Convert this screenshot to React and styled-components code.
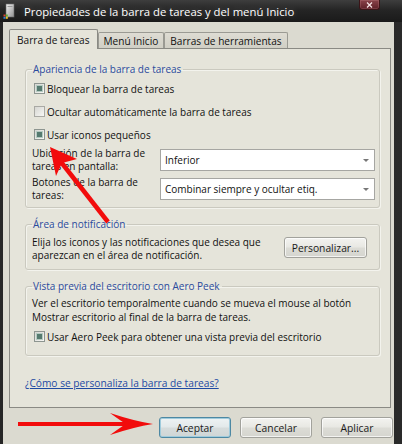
import React from 'react';
import styled, { createGlobalStyle } from 'styled-components';

const GlobalStyle = createGlobalStyle`
  html, body {
    margin: 0;
    padding: 0;
  }
  body {
    background: #1b1b1b;
    font-family: "Open Sans", "Noto Sans", sans-serif;
  }
`;

const Window = styled.div`
  position: relative;
  width: 402px;
  height: 444px;
  overflow: hidden;
  display: flex;
  flex-direction: column;
  background: linear-gradient(90deg, #262626, #1d1d1d 50%, #2a2a2a);
`;

const TitleBar = styled.div`
  height: 22px;
  flex-shrink: 0;
  display: flex;
  align-items: center;
  padding-left: 3px;
  background: linear-gradient(#3e3e3e, #252525 45%, #1a1a1a);
`;

const TitleIcon = styled.svg`
  width: 12px;
  height: 16px;
  margin-right: 9px;
  flex-shrink: 0;
`;

const TitleText = styled.span`
  color: #fff;
  font-size: 11.3px;
  white-space: nowrap;
  text-shadow: 0 0 6px rgba(255, 255, 255, 0.25);
`;

const CloseButton = styled.div`
  align-self: flex-start;
  margin-left: auto;
  margin-right: 22px;
  width: 21px;
  height: 10px;
  box-sizing: border-box;
  border: 1px solid #3a1417;
  border-top: none;
  border-radius: 0 0 3px 3px;
  background: linear-gradient(#8a434a, #5e2028);
  box-shadow: inset 0 0 0 1px rgba(255, 200, 200, 0.15);
  display: flex;
  align-items: center;
  justify-content: center;
`;

const Body = styled.div`
  flex: 1;
  margin: 0 8px 0 3px;
  padding: 7px 1px 0 6px;
  background: #dbdad0;
  display: flex;
  flex-direction: column;
  font-size: 10px;
  color: #111;
`;

const TabStrip = styled.div`
  height: 20px;
  display: flex;
  align-items: flex-end;
  margin-bottom: -1px;
  position: relative;
  z-index: 1;
`;

const Tab = styled.div`
  height: ${p => (p.$active ? 20 : 16)}px;
  margin-bottom: ${p => (p.$active ? 0 : 1)}px;
  padding: 0 ${p => (p.$active ? 7 : 5)}px;
  box-sizing: border-box;
  border: 1px solid ${p => (p.$active ? '#8a8a84' : '#9a9a93')};
  border-bottom: none;
  border-radius: 2px 2px 0 0;
  background: ${p => (p.$active ? '#e5e4da' : 'linear-gradient(#dedcd3, #d0cfc5)')};
  display: flex;
  align-items: center;
  padding-top: ${p => (p.$active ? 0 : 1)}px;
  font-size: 10.1px;
  white-space: nowrap;
`;

const Panel = styled.div`
  height: 360px;
  box-sizing: border-box;
  margin-right: 2px;
  border: 1px solid #8a8a84;
  background: #e5e4da;
  padding: 14px 10px 0 15px;
  display: flex;
  flex-direction: column;
`;

const Group = styled.fieldset`
  margin: 0;
  min-width: 0;
  border: 1px solid #cac9bf;
  border-radius: 3px;
  padding: 0 5px 7px 6px;
  box-shadow: 1px 1px 0 #f3f3ed, inset 1px 1px 0 #f3f3ed;

  & + & {
    margin-top: 10px;
  }
`;

const Legend = styled.legend`
  padding: 0 2px 0 1px;
  line-height: 13px;
  color: #2b4a9d;
`;

const CheckList = styled.div`
  padding-top: ${p => p.$top || 0}px;
  display: flex;
  flex-direction: column;
`;

const CheckRow = styled.label`
  height: 23px;
  display: flex;
  align-items: center;
  gap: 2px;
  padding-left: 2px;
  white-space: nowrap;
`;

const Box = styled.span`
  width: 11px;
  height: 11px;
  box-sizing: border-box;
  border: 1px solid ${p => (p.$checked ? '#8d9590' : '#a9a9a4')};
  background: linear-gradient(135deg, #d6d6d2, #f7f7f4);
  display: flex;
  align-items: center;
  justify-content: center;
  flex-shrink: 0;

  &::after {
    content: '';
    display: ${p => (p.$checked ? 'block' : 'none')};
    width: 5px;
    height: 5px;
    background: #557a6f;
    box-shadow: 0 0 0 1px #b4cac1;
  }
`;

const Checkbox = ({ checked, children }) => (
  <CheckRow>
    <Box $checked={checked} />
    {children}
  </CheckRow>
);

const FieldGrid = styled.div`
  margin-top: 3px;
  display: grid;
  grid-template-columns: 128px 215px;
  grid-auto-rows: 22px;
  row-gap: 7px;
  align-items: center;
`;

const FieldLabel = styled.div`
  height: 22px;
  display: flex;
  flex-direction: column;
  justify-content: center;
  line-height: 13.5px;
  white-space: nowrap;
`;

const Select = styled.div`
  height: 22px;
  box-sizing: border-box;
  border: 1px solid #a6a6a2;
  background: #fff;
  padding: 0 5px 0 4px;
  display: flex;
  align-items: center;
  white-space: nowrap;

  &::after {
    content: '';
    margin-left: auto;
    border-left: 3px solid transparent;
    border-right: 3px solid transparent;
    border-top: 3px solid #777;
  }
`;

const InfoRow = styled.div`
  display: flex;
  align-items: flex-start;
  justify-content: space-between;
  padding-top: 5px;
`;

const Paragraph = styled.div`
  line-height: ${p => p.$lh || 13}px;
  padding-top: ${p => p.$top || 0}px;
  white-space: nowrap;
`;

const PushButton = styled.button`
  width: ${p => p.$width || 72}px;
  height: 21px;
  margin: ${p => p.$margin || 0};
  flex-shrink: 0;
  box-sizing: border-box;
  padding: 0;
  font-family: inherit;
  font-size: 10.3px;
  color: #1a1a1a;
  border: 1px solid ${p => (p.$default ? '#4d88a3' : '#a2a29c')};
  border-radius: 3px;
  background: ${p =>
    p.$default
      ? 'linear-gradient(#eef3f4, #e3e9ea 48%, #d6dcdc 52%, #d0d6d6)'
      : 'linear-gradient(#f3f3f0, #e8e8e3 48%, #dcdcd6 52%, #d5d5cf)'};
  box-shadow: inset 0 0 0 1px ${p => (p.$default ? '#9fcbdc' : 'rgba(255,255,255,0.7)')};
`;

const HelpLink = styled.a`
  margin-top: 21px;
  line-height: 13px;
  font-size: 10.2px;
  color: #1e4aa3;
  text-decoration: underline;
  align-self: flex-start;
`;

const ButtonBar = styled.div`
  margin-top: 9px;
  display: flex;
  justify-content: flex-end;
  gap: 9px;
`;

const Overlay = styled.svg`
  position: absolute;
  left: 0;
  top: 0;
  width: 402px;
  height: 444px;
  pointer-events: none;
`;

export default function App() {
  return (
    <>
      <GlobalStyle />
      <Window>
        <TitleBar>
          <TitleIcon viewBox="0 0 12 16">
            <defs>
              <linearGradient id="doc" x1="0" y1="0" x2="1" y2="1">
                <stop offset="0" stopColor="#f4f4f4" />
                <stop offset="1" stopColor="#8f8f8f" />
              </linearGradient>
            </defs>
            <rect x="3" y="1" width="8" height="13" fill="url(#doc)" stroke="#6a6a6a" strokeWidth="0.6" />
            <rect x="4.5" y="3" width="5" height="1" fill="#9a9a9a" />
            <rect x="0.5" y="11.5" width="2" height="2" fill="#e2412b" />
            <rect x="2.8" y="11.5" width="2" height="2" fill="#5bb132" />
            <rect x="0.5" y="13.8" width="2" height="2" fill="#2f7fd8" />
            <rect x="2.8" y="13.8" width="2" height="2" fill="#f2c02a" />
          </TitleIcon>
          <TitleText>Propiedades de la barra de tareas y del menú Inicio</TitleText>
          <CloseButton>
            <svg width="7" height="6" viewBox="0 0 7 6">
              <path d="M1 0.5L6 5.5M6 0.5L1 5.5" stroke="#f6e3e4" strokeWidth="1.2" />
            </svg>
          </CloseButton>
        </TitleBar>

        <Body>
          <TabStrip>
            <Tab $active>Barra de tareas</Tab>
            <Tab>Menú Inicio</Tab>
            <Tab>Barras de herramientas</Tab>
          </TabStrip>

          <Panel>
            <Group>
              <Legend>Apariencia de la barra de tareas</Legend>
              <CheckList $top={1}>
                <Checkbox checked>Bloquear la barra de tareas</Checkbox>
                <Checkbox>Ocultar automáticamente la barra de tareas</Checkbox>
                <Checkbox checked>Usar iconos pequeños</Checkbox>
              </CheckList>
              <FieldGrid>
                <FieldLabel>
                  <span>Ubicación de la barra de</span>
                  <span>tareas en pantalla:</span>
                </FieldLabel>
                <Select>Inferior</Select>
                <FieldLabel>
                  <span>Botones de la barra de</span>
                  <span>tareas:</span>
                </FieldLabel>
                <Select>Combinar siempre y ocultar etiq.</Select>
              </FieldGrid>
            </Group>

            <Group>
              <Legend>Área de notificación</Legend>
              <InfoRow>
                <Paragraph>
                  Elija los iconos y las notificaciones que desea que
                  <br />
                  aparezcan en el área de notificación.
                </Paragraph>
                <PushButton $width={83} $margin="1px 7px 0 0">
                  Personalizar...
                </PushButton>
              </InfoRow>
            </Group>

            <Group>
              <Legend>Vista previa del escritorio con Aero Peek</Legend>
              <Paragraph $lh={14} $top={3}>
                Ver el escritorio temporalmente cuando se mueva el mouse al botón
                <br />
                Mostrar escritorio al final de la barra de tareas.
              </Paragraph>
              <CheckList $top={1}>
                <Checkbox checked>Usar Aero Peek para obtener una vista previa del escritorio</Checkbox>
              </CheckList>
            </Group>

            <HelpLink href="#">¿Cómo se personaliza la barra de tareas?</HelpLink>
          </Panel>

          <ButtonBar>
            <PushButton $default>Aceptar</PushButton>
            <PushButton>Cancelar</PushButton>
            <PushButton>Aplicar</PushButton>
          </ButtonBar>
        </Body>

        <Overlay viewBox="0 0 402 444">
          <line x1="108" y1="222" x2="61" y2="162" stroke="#f20c0c" strokeWidth="4.5" />
          <polygon points="50,147 77,159 62,163 56,176" fill="#f20c0c" />
          <line x1="18" y1="424" x2="130" y2="424" stroke="#f20c0c" strokeWidth="4" />
          <path
            d="M110 413 Q134 421 153 424 Q134 427 110 435 Q121 427 126 424 Q121 421 110 413 Z"
            fill="#f20c0c"
          />
        </Overlay>
      </Window>
    </>
  );
}
